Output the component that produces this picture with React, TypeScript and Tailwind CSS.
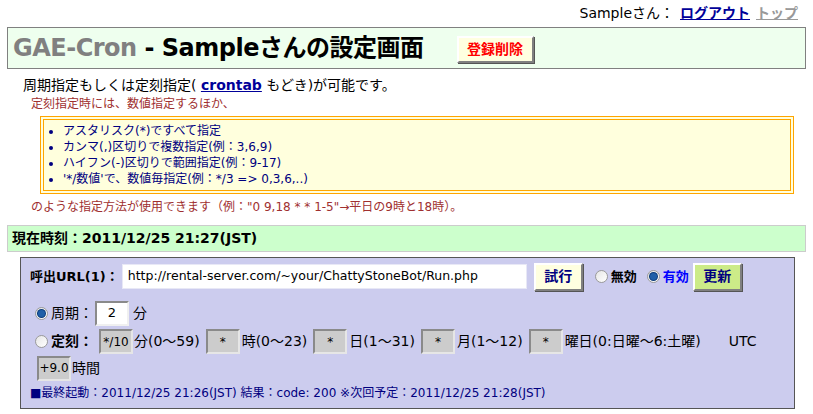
import React from 'react'

const font = { fontFamily: '"DejaVu Sans", Verdana, "Noto Sans CJK JP", sans-serif' }

function Radio({ checked }: { checked?: boolean }) {
  return (
    <span className="inline-flex h-[13px] w-[13px] items-center justify-center rounded-full border border-[#9a9a9a] bg-gradient-to-br from-[#e6e6e6] to-[#ffffff]">
      {checked && <span className="h-[7px] w-[7px] rounded-full bg-[#1f5fa8] ring-1 ring-[#0a3a7a]" />}
    </span>
  )
}

function GrayBox({ value, w = 'w-[34px]' }: { value: string; w?: string }) {
  return (
    <span className={`inline-flex h-[25px] ${w} items-center justify-center border-2 border-t-[#8a8a8a] border-l-[#8a8a8a] border-b-[#e6e6e6] border-r-[#e6e6e6] bg-[#cccccc] text-[12px]`}>
      {value}
    </span>
  )
}

export default function App() {
  return (
    <div className="min-h-screen bg-white text-black" style={font}>
      {/* top links */}
      <div className="flex h-[27px] items-center justify-end gap-[6px] pr-[15px] text-[14px]">
        <span>Sampleさん：</span>
        <a href="#" className="font-bold text-[#000099] underline">ログアウト</a>
        <a href="#" className="font-bold text-[#999999] underline">トップ</a>
      </div>

      {/* title */}
      <div className="mx-[7px] flex h-[42px] items-center border border-[#808080] bg-[#eeffee] pl-[5px]">
        <h1 className="text-[24px] font-bold tracking-[-0.5px]">
          <span className="text-[#808080]">GAE-Cron</span> - Sampleさんの設定画面
        </h1>
        <button className="ml-[33px] mt-[2px] h-[27px] w-[77px] border-2 border-t-white border-l-white border-b-[#808080] border-r-[#808080] bg-[#ffffe0] text-[14px] font-bold text-[#ff0000] shadow-[1px_1px_0_#555]">
          登録削除
        </button>
      </div>

      <p className="ml-[23px] mt-[7px] text-[14px] leading-[18px]">
        周期指定もしくは定刻指定( <a href="#" className="font-bold text-[#000099] underline">crontab</a> もどき)が可能です。
      </p>
      <p className="ml-[31px] mt-[2px] text-[12px] leading-[16px] text-[#a03030]">定刻指定時には、数値指定するほか、</p>

      <div className="ml-[40px] mr-[19px] mt-[4px] border-[4px] border-double border-[#ffa500] bg-[#ffffdd] py-[3px]">
        <ul className="list-disc pl-[19px] text-[12px] leading-[16px] text-[#000080]">
          <li>アスタリスク(*)ですべて指定</li>
          <li>カンマ(,)区切りで複数指定(例：3,6,9)</li>
          <li>ハイフン(-)区切りで範囲指定(例：9-17)</li>
          <li>'*/数値'で、数値毎指定(例：*/3 =&gt; 0,3,6,..)</li>
        </ul>
      </div>

      <p className="ml-[31px] mt-[5px] text-[12px] leading-[16px] text-[#a03030]">
        のような指定方法が使用できます（例："0 9,18 * * 1-5"→平日の9時と18時）。
      </p>

      <div className="mx-[7px] mt-[10px] flex h-[27px] items-center border border-[#cccccc] bg-[#ccffcc] pl-[4px] text-[14px] font-bold">
        現在時刻：2011/12/25 21:27(JST)
      </div>

      <div className="ml-[20px] mr-[18px] mt-[5px] border border-[#555555] bg-[#ccccee] pb-[7px] pl-[9px] pt-[4px] text-[13px]">
        <div className="flex h-[29px] items-center">
          <span className="font-bold">呼出URL(1)：</span>
          <span className="ml-[3px] flex h-[25px] w-[405px] items-center border border-[#e8e8f6] bg-white pl-[5px] text-[12.5px]">
            http://rental-server.com/~your/ChattyStoneBot/Run.php
          </span>
          <button className="ml-[7px] h-[28px] w-[49px] border-2 border-t-white border-l-white border-b-[#808080] border-r-[#808080] bg-[#ffffe0] text-[14px] font-bold text-[#000080] shadow-[1px_1px_0_#555]">
            試行
          </button>
          <span className="ml-[12px] flex items-center gap-[3px] font-bold">
            <Radio /> 無効
          </span>
          <span className="ml-[10px] flex items-center gap-[3px] font-bold text-[#0000ff]">
            <Radio checked /> 有効
          </span>
          <button className="ml-[4px] h-[28px] w-[49px] border-2 border-t-white border-l-white border-b-[#808080] border-r-[#808080] bg-[#cceb88] text-[14px] font-bold text-[#000080] shadow-[1px_1px_0_#555]">
            更新
          </button>
        </div>

        <div className="mt-[10px] flex h-[24px] items-center pl-[5px] text-[14px]">
          <Radio checked />
          <span className="ml-[3px]">周期：</span>
          <span className="ml-[2px] inline-flex h-[25px] w-[34px] items-center justify-center border-2 border-t-[#8a8a8a] border-l-[#8a8a8a] border-b-[#f0f0f0] border-r-[#f0f0f0] bg-white text-[13px]">
            2
          </span>
          <span className="ml-[4px]">分</span>
        </div>

        <div className="mt-[4px] flex h-[25px] items-center pl-[5px] text-[14px]">
          <Radio />
          <span className="ml-[3px] font-bold">定刻：</span>
          <span className="ml-[6px]"><GrayBox value="*/10" /></span>
          <span className="ml-[1px]">分(0～59)</span>
          <span className="ml-[6px]"><GrayBox value="*" /></span>
          <span className="ml-[2px]">時(0～23)</span>
          <span className="ml-[6px]"><GrayBox value="*" /></span>
          <span className="ml-[2px]">日(1～31)</span>
          <span className="ml-[6px]"><GrayBox value="*" /></span>
          <span className="ml-[2px]">月(1～12)</span>
          <span className="ml-[6px]"><GrayBox value="*" /></span>
          <span className="ml-[2px]">曜日(0:日曜～6:土曜)</span>
          <span className="ml-[28px]">UTC</span>
        </div>

        <div className="mt-[1px] flex h-[26px] items-center pl-[7px] text-[14px]">
          <GrayBox value="+9.0" />
          <span className="ml-[1px]">時間</span>
        </div>

        <div className="mt-[4px] text-[12px] leading-[16px] text-[#000080]">
          ■最終起動：2011/12/25 21:26(JST) 結果：code: 200 ※次回予定：2011/12/25 21:28(JST)
        </div>
      </div>
    </div>
  )
}
